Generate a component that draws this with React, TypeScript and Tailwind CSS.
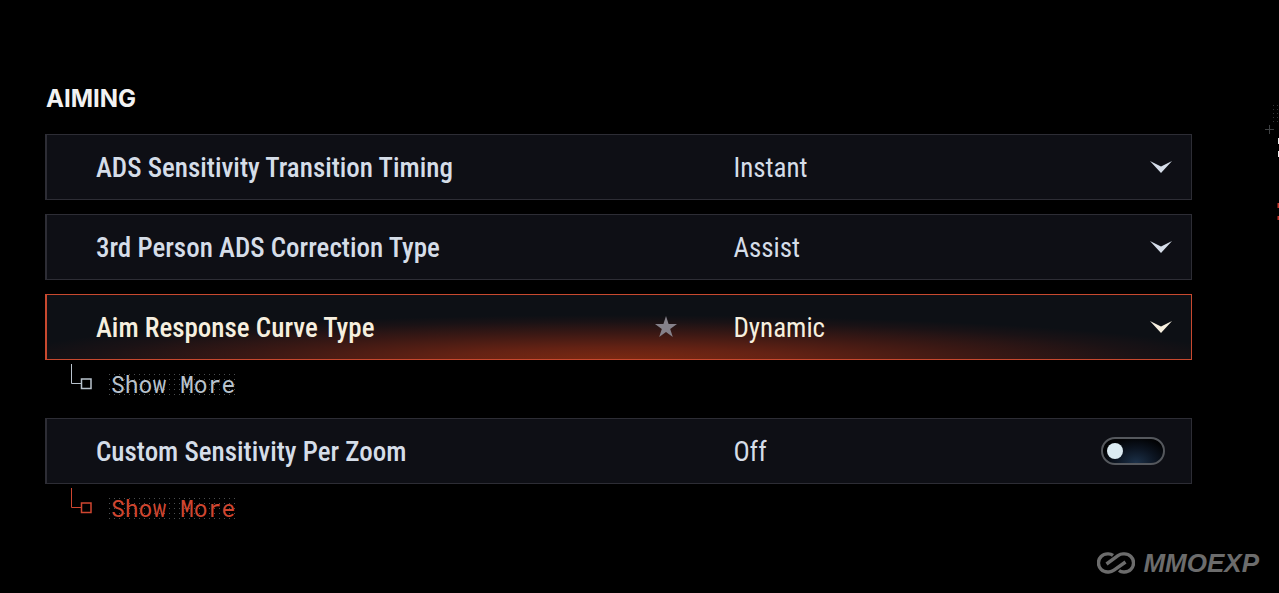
import { useState } from "react";
import clsx from "clsx";

interface SelectSetting {
  id: string;
  label: string;
  value: string;
  options: string[];
  active?: boolean;
}

const selectSettings: SelectSetting[] = [
  {
    id: "ads-timing",
    label: "ADS Sensitivity Transition Timing",
    value: "Instant",
    options: ["Instant", "Gradual", "After Zoom"],
  },
  {
    id: "ads-correction",
    label: "3rd Person ADS Correction Type",
    value: "Assist",
    options: ["Assist", "Precision"],
  },
  {
    id: "aim-curve",
    label: "Aim Response Curve Type",
    value: "Dynamic",
    options: ["Standard", "Linear", "Dynamic"],
    active: true,
  },
];

const rowStyles =
  "grid h-[66px] grid-cols-[60%_1fr] items-center border border-l-2 font-['Roboto_Condensed',Roboto,sans-serif]";
const idleStyles = "border-[#2d2d35] bg-[#0e0f15] text-[#d5dde8]";
const activeStyles =
  "border-[#c8492f] bg-[#0d1015] bg-[radial-gradient(ellipse_54%_68%_at_50%_100%,#7c2911_0%,#642214_28%,#3a1814_60%,#1a1215_85%,transparent_100%)] bg-origin-border text-[#f6efdf]";
const labelStyles = "pt-0.5 text-[27px] leading-10 font-medium";

const Chevron = () => (
  <svg
    className="pointer-events-none absolute right-[19px] h-3 w-[22px]"
    viewBox="0 0 22 12"
    fill="currentColor"
    aria-hidden="true"
  >
    <path d="M0 0 L11 5.5 L22 0 L11 12 Z" />
  </svg>
);

const Star = () => (
  <svg
    className="h-[22px] w-[22px] text-[#85818a]"
    viewBox="0 0 22 22"
    fill="currentColor"
    aria-hidden="true"
  >
    <path d="M11 0 L13.6 8 H22 L15.2 13 L17.8 21 L11 16.1 L4.2 21 L6.8 13 L0 8 H8.4 Z" />
  </svg>
);

const SelectRow = ({ setting }: { setting: SelectSetting }) => {
  const [value, setValue] = useState(setting.value);

  return (
    <div className={clsx(rowStyles, setting.active ? activeStyles : idleStyles)}>
      <div className="flex items-center justify-between pr-14 pl-[49px]">
        <label htmlFor={setting.id} className={labelStyles}>
          {setting.label}
        </label>
        {setting.active && <Star />}
      </div>
      <div className="relative flex h-full items-center">
        <select
          id={setting.id}
          value={value}
          onChange={(e) => setValue(e.target.value)}
          className="h-full w-full appearance-none bg-transparent pt-0.5 text-[27px] outline-none"
        >
          {setting.options.map((option) => (
            <option key={option} value={option}>
              {option}
            </option>
          ))}
        </select>
        <Chevron />
      </div>
    </div>
  );
};

const ToggleRow = () => {
  const [enabled, setEnabled] = useState(false);

  return (
    <div className={clsx(rowStyles, idleStyles)}>
      <div className="pl-[49px]">
        <label htmlFor="custom-zoom" className={clsx("block", labelStyles)}>
          Custom Sensitivity Per Zoom
        </label>
      </div>
      <div className="flex items-center justify-between pr-[26px]">
        <span className="pt-0.5 text-[27px]">{enabled ? "On" : "Off"}</span>
        <input
          id="custom-zoom"
          type="checkbox"
          role="switch"
          checked={enabled}
          onChange={(e) => setEnabled(e.target.checked)}
          className="flex h-7 w-16 appearance-none items-center rounded-full border-2 border-[#55585d] bg-black bg-[radial-gradient(ellipse_at_55%_100%,#1c3149_0%,#0b131f_45%,#020305_75%)] px-1 before:h-4 before:w-4 before:rounded-full before:bg-[#dcebf2] checked:before:ml-auto"
        />
      </div>
    </div>
  );
};

const ShowMore = ({ highlight = false }: { highlight?: boolean }) => (
  <div
    className={clsx(
      "flex h-11 items-start pt-1 pl-[25px]",
      highlight ? "text-[#cf4630]" : "text-[#b9c3cd]"
    )}
  >
    <svg
      className="h-[27px] w-[23px]"
      viewBox="0 0 23 27"
      fill="none"
      stroke="currentColor"
      aria-hidden="true"
    >
      <path d="M1.5 0 V19.5 H11" />
      <rect x="11.5" y="15" width="9.5" height="9.5" strokeWidth="1.5" />
    </svg>
    <button
      type="button"
      className="mt-2 ml-[14px] h-6 bg-[radial-gradient(circle,#4b4e50_0.7px,transparent_1px)] bg-size-[5px_5px] px-1 font-['Roboto_Mono','Liberation_Mono',monospace] text-[23px] leading-6"
    >
      Show More
    </button>
  </div>
);

const EdgeMarks = () => (
  <svg
    className="absolute top-[100px] right-0 h-[124px] w-4"
    viewBox="0 0 16 124"
    aria-hidden="true"
  >
    <path d="M2 29.5 H11 M6.5 25 V34" stroke="#3f4143" />
    <path
      d="M10.5 5 V22 M14.5 5 V22"
      stroke="#343638"
      strokeDasharray="1 3"
    />
    <path d="M15 38 h1 v6 h-1 z M15 51 h1 v6 h-1 z" fill="#e8e8e8" />
    <path d="M14.5 103 h1.5 v5 h-1.5 z M14.5 116 h1.5 v4 h-1.5 z" fill="#c9352b" />
  </svg>
);

const Watermark = () => (
  <div className="absolute right-5 bottom-4 flex items-center gap-2 text-[#6c6c6c]">
    <svg
      className="h-[22px] w-[38px]"
      viewBox="0 0 38 22"
      fill="none"
      stroke="currentColor"
      strokeWidth="3.4"
      aria-hidden="true"
    >
      <path d="M16 3.4 Q14 1.9 11.5 1.9 H10.5 A9 9 0 0 0 10.5 20 H12 Q14.5 20 17 18.2 L28.5 10" />
      <path d="M22 18.5 Q24 20 26.5 20 H27.5 A9 9 0 0 0 27.5 1.9 H26 Q23.5 1.9 21 3.7 L9.5 12" />
    </svg>
    <span className="font-['Liberation_Sans',sans-serif] text-[26px] leading-7 font-bold italic">
      MMOEXP
    </span>
  </div>
);

const App: React.FC = () => {
  return (
    <main className="relative min-h-screen overflow-hidden bg-black pt-[84px] pr-[87px] pl-[45px]">
      <h2 className="pl-px font-[Inter,sans-serif] text-[24px] leading-[30px] font-bold text-[#f2f2f2]">
        AIMING
      </h2>

      <div className="mt-5 flex flex-col gap-[14px]">
        {selectSettings.map((setting) => (
          <SelectRow key={setting.id} setting={setting} />
        ))}
      </div>
      <ShowMore />

      <div className="mt-[14px]">
        <ToggleRow />
      </div>
      <ShowMore highlight />

      <EdgeMarks />
      <Watermark />
    </main>
  );
};

export default App;
